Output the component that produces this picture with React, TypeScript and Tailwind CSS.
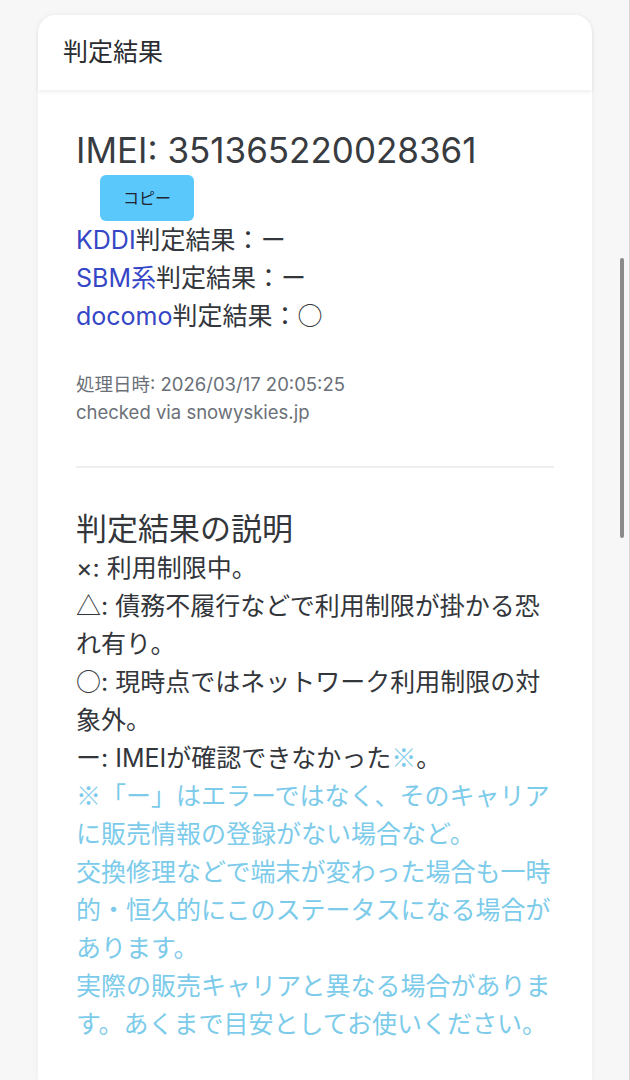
const font = { fontFamily: '"Inter", "Noto Sans CJK JP", sans-serif' }
const sym = { fontFamily: '"Noto Sans CJK JP", sans-serif' }

type CarrierRowProps = {
  name: string
  result: string
}

function Sym({ children, className = "" }: { children: string; className?: string }) {
  return (
    <span className={"leading-none " + className} style={sym}>
      {children}
    </span>
  )
}

function CarrierRow({ name, result }: CarrierRowProps) {
  return (
    <p className="text-[25px] leading-[38px] text-[#33363b]">
      <span className="text-[#3547c6]">{name}</span>
      判定結果：
      <Sym>{result}</Sym>
    </p>
  )
}

export default function App() {
  return (
    <div
      className="relative h-[1080px] overflow-hidden bg-[#f7f7f7] pt-[15px] pr-[38px] pl-[38px]"
      style={font}
    >
      <div className="flex h-full flex-col rounded-t-[18px] bg-white shadow-[0_0_6px_rgba(0,0,0,0.05)]">
        <div className="relative z-10 flex h-[75px] items-center rounded-t-[18px] bg-white px-[25px] shadow-[0_2px_4px_rgba(0,0,0,0.07)]">
          <h1 className="text-[25px] text-[#2a2c30]">判定結果</h1>
        </div>

        <div className="flex-1 px-[38px] pt-[40px]">
          <h2 className="text-[35px] leading-[40px] text-[#383b40]">IMEI: 351365220028361</h2>
          <button
            type="button"
            className="mt-[5px] ml-[24px] h-[46px] w-[94px] rounded-[6px] bg-[#5ac8fa] text-[16px] text-[#1f2430]"
          >
            コピー
          </button>

          <CarrierRow name="KDDI" result="ー" />
          <CarrierRow name="SBM系" result="ー" />
          <CarrierRow name="docomo" result="○" />

          <div className="mt-[35px] text-[18.5px] leading-[28px] text-[#6b7078]">
            <p>処理日時: 2026/03/17 20:05:25</p>
            <p>checked via snowyskies.jp</p>
          </div>

          <hr className="mt-[40px] border-t-2 border-[#eeeeee]" />

          <h3 className="mt-[41px] text-[31px] leading-[40px] text-[#33363b]">判定結果の説明</h3>
          <div className="text-[25px] leading-[38px] text-[#33363b]">
            <p>×: 利用制限中。</p>
            <p>
              <Sym>△</Sym>: 債務不履行などで利用制限が掛かる恐れ有り。
            </p>
            <p>
              <Sym>○</Sym>: 現時点ではネットワーク利用制限の対象外。
            </p>
            <p>
              <Sym>ー</Sym>: IMEIが確認できなかった<Sym className="text-[#7ccbea]">※</Sym>。
            </p>
            <div className="text-[#7ccbea]">
              <p>
                <Sym>※</Sym>「ー」はエラーではなく、そのキャリアに販売情報の登録がない場合など。
              </p>
              <p>交換修理などで端末が変わった場合も一時的・恒久的にこのステータスになる場合があります。</p>
              <p>実際の販売キャリアと異なる場合があります。あくまで目安としてお使いください。</p>
            </div>
          </div>
        </div>
      </div>

      <div className="absolute top-0 right-0 h-full w-px bg-[#d4d4d4]" />
      <div className="absolute top-[258px] right-[6px] h-[280px] w-[4px] rounded-full bg-[#8a8a8a]" />
    </div>
  )
}
